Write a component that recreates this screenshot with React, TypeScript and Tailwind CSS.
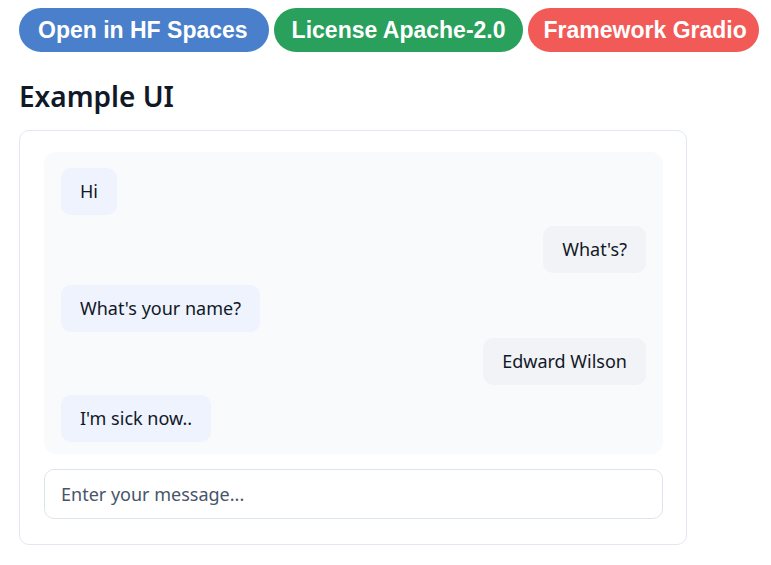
const messages = [
  { text: "Hi", mine: false, mt: "mt-0" },
  { text: "What's?", mine: true, mt: "mt-[11px]" },
  { text: "What's your name?", mine: false, mt: "mt-[12px]" },
  { text: "Edward Wilson", mine: true, mt: "mt-[6px]" },
  { text: "I'm sick now..", mine: false, mt: "mt-[10px]" },
];

const Badge = ({ text, color }: { text: string; color: string }) => {
  return (
    <span
      className={`${color} flex h-[44px] shrink-0 items-center whitespace-nowrap rounded-full text-[23px] font-bold text-white font-['Liberation_Sans',Arial,sans-serif]`}
    >
      {text}
    </span>
  );
};

export default function App() {
  return (
    <div className="min-h-[565px] w-[771px] bg-white px-[19px] pt-[8px] font-['Noto_Sans',sans-serif]">
      <div className="flex gap-[5px]">
        <Badge text="Open in HF Spaces" color="bg-[#4a7fcb] pl-[19px] pr-[21px]" />
        <Badge text="License Apache-2.0" color="bg-[#29a05c] pl-[18px] pr-[17px]" />
        <Badge text="Framework Gradio" color="bg-[#f25a57] pl-[16px] pr-[12px]" />
      </div>
      <h2 className="mt-[26px] text-[28px] font-semibold leading-[36px] text-[#111827]">Example UI</h2>
      <div className="mt-[16px] w-[668px] rounded-[10px] border border-[#e2e8f0] pl-[24px] pr-[23px] pt-[21px] pb-[25px]">
        <div className="flex flex-col rounded-[12px] bg-[#f8fafc] px-[17px] pt-[16px] pb-[12px]">
          {messages.map((m) => (
            <div
              key={m.text}
              className={`${m.mt} ${m.mine ? "self-end bg-[#f1f3f6]" : "self-start bg-[#eef3fd]"} flex h-[47px] items-center rounded-[10px] px-[19px] text-[18px] text-[#111827]`}
            >
              {m.text}
            </div>
          ))}
        </div>
        <input
          className="mt-[15px] h-[50px] w-full rounded-[10px] border border-[#dde5ec] px-[16px] text-[18px] text-[#334155] outline-none placeholder:text-[#475569]"
          placeholder="Enter your message..."
        />
      </div>
    </div>
  );
}
